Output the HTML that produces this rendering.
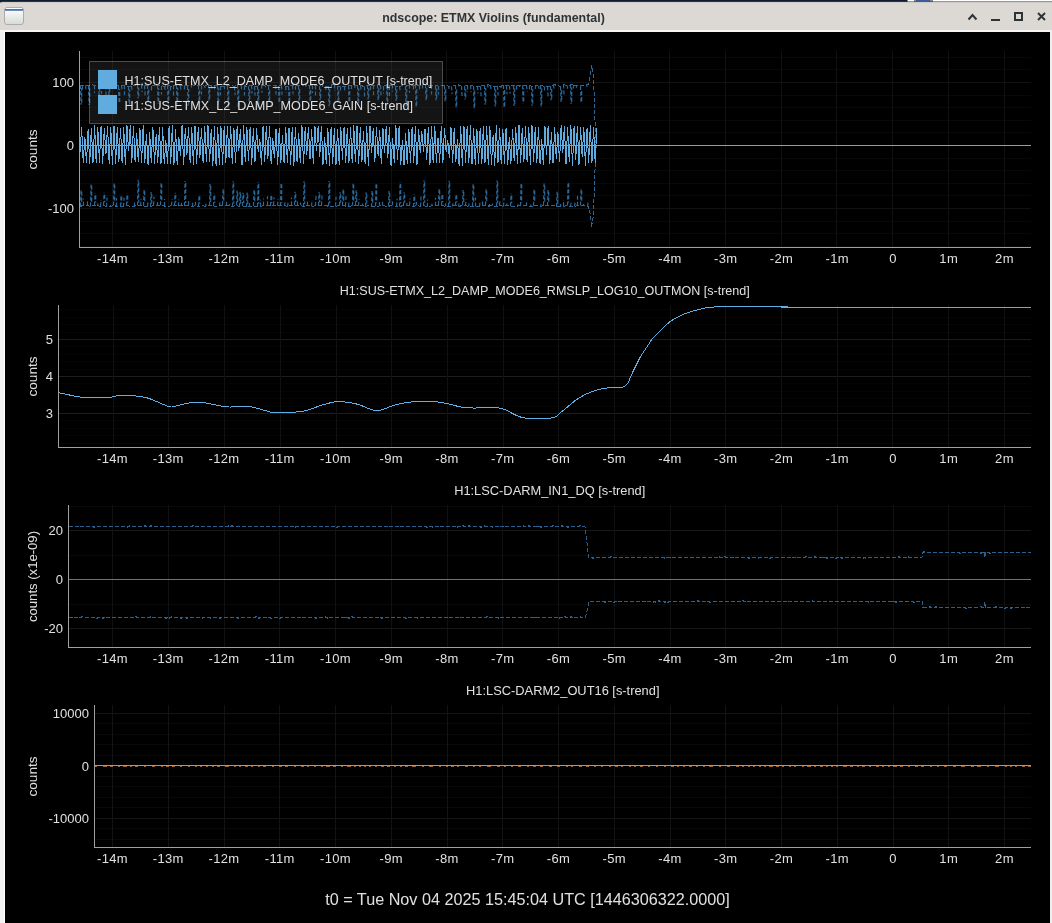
<!DOCTYPE html>
<html><head><meta charset="utf-8"><title>ndscope: ETMX Violins (fundamental)</title>
<style>
html,body{margin:0;padding:0;width:1052px;height:923px;overflow:hidden;background:#000;}
svg{display:block;will-change:transform;}
text{font-family:'Liberation Sans', sans-serif;}
</style></head><body>
<svg width="1052" height="923" viewBox="0 0 1052 923">
<rect x="0" y="0" width="1052" height="923" fill="#f3f2f0"/>
<rect x="0" y="0" width="1052" height="2" fill="#0f1c30"/>
<rect x="907" y="0" width="145" height="1.6" fill="#8a8a8a"/><rect x="908" y="0" width="6" height="1.6" fill="#ffffff"/><rect x="916" y="0" width="14" height="1.6" fill="#3b5b98"/><rect x="933" y="0" width="119" height="1.6" fill="#ffffff"/>
<rect x="0" y="1.6" width="1052" height="0.8" fill="#5a5a5a"/>
<rect x="0" y="0" width="1.5" height="3.5" fill="#0f1c30"/>
<rect x="0" y="2.4" width="1052" height="28" fill="#dcd8d4"/>
<rect x="0" y="30" width="1052" height="2" fill="#f7f6f5"/>
<rect x="1050" y="30" width="2" height="893" fill="#efefef"/>
<g>
<rect x="4.5" y="7.5" width="19" height="17" rx="2" fill="#808080"/>
<linearGradient id="wg" x1="0" y1="0" x2="0" y2="1"><stop offset="0" stop-color="#ffffff"/><stop offset="1" stop-color="#d8dcd8"/></linearGradient>
<rect x="5" y="8" width="18" height="16" rx="1.5" fill="url(#wg)"/>
<rect x="5" y="9" width="18" height="1.8" fill="#4a74b0"/>
</g>
<text x="493.5" y="21.6" text-anchor="middle" font-size="13" font-weight="bold" fill="#2e3436" textLength="222.7" lengthAdjust="spacingAndGlyphs">ndscope: ETMX Violins (fundamental)</text>
<g fill="none" stroke="#2e3436" stroke-width="2"><polyline points="968.5,19.5 972.5,15 976.5,19.5"/><rect x="1015" y="13" width="7" height="7"/><line x1="1038" y1="13" x2="1045" y2="20"/><line x1="1045" y1="13" x2="1038" y2="20"/></g><rect x="991" y="19" width="9" height="2" fill="#2e3436"/>
<rect x="5" y="32" width="1045" height="891" fill="#000"/>
<rect x="4" y="32" width="1" height="891" fill="#ffffff"/>
<g><rect x="80" y="246" width="951" height="1" fill="rgb(8,8,8)"/><rect x="80" y="233" width="951" height="1" fill="rgb(8,8,8)"/><rect x="80" y="221" width="951" height="1" fill="rgb(8,8,8)"/><rect x="80" y="195" width="951" height="1" fill="rgb(8,8,8)"/><rect x="80" y="183" width="951" height="1" fill="rgb(8,8,8)"/><rect x="80" y="170" width="951" height="1" fill="rgb(8,8,8)"/><rect x="80" y="158" width="951" height="1" fill="rgb(8,8,8)"/><rect x="80" y="132" width="951" height="1" fill="rgb(8,8,8)"/><rect x="80" y="120" width="951" height="1" fill="rgb(8,8,8)"/><rect x="80" y="107" width="951" height="1" fill="rgb(8,8,8)"/><rect x="80" y="95" width="951" height="1" fill="rgb(8,8,8)"/><rect x="80" y="69" width="951" height="1" fill="rgb(8,8,8)"/><rect x="80" y="57" width="951" height="1" fill="rgb(8,8,8)"/><rect x="80" y="82" width="951" height="1" fill="rgb(18,18,18)"/><rect x="80" y="145" width="951" height="1" fill="rgb(18,18,18)"/><rect x="80" y="208" width="951" height="1" fill="rgb(18,18,18)"/><rect x="112" y="51" width="1" height="196" fill="rgb(17,17,17)"/><rect x="168" y="51" width="1" height="196" fill="rgb(17,17,17)"/><rect x="224" y="51" width="1" height="196" fill="rgb(17,17,17)"/><rect x="279" y="51" width="1" height="196" fill="rgb(17,17,17)"/><rect x="335" y="51" width="1" height="196" fill="rgb(17,17,17)"/><rect x="391" y="51" width="1" height="196" fill="rgb(17,17,17)"/><rect x="446" y="51" width="1" height="196" fill="rgb(17,17,17)"/><rect x="502" y="51" width="1" height="196" fill="rgb(17,17,17)"/><rect x="558" y="51" width="1" height="196" fill="rgb(17,17,17)"/><rect x="614" y="51" width="1" height="196" fill="rgb(17,17,17)"/><rect x="669" y="51" width="1" height="196" fill="rgb(17,17,17)"/><rect x="725" y="51" width="1" height="196" fill="rgb(17,17,17)"/><rect x="781" y="51" width="1" height="196" fill="rgb(17,17,17)"/><rect x="836" y="51" width="1" height="196" fill="rgb(17,17,17)"/><rect x="892" y="51" width="1" height="196" fill="rgb(17,17,17)"/><rect x="948" y="51" width="1" height="196" fill="rgb(17,17,17)"/><rect x="1004" y="51" width="1" height="196" fill="rgb(17,17,17)"/></g>
<path d="M80.00,85.15 L82.87,85.57 L85.71,85.37 L88.57,85.63 L91.95,84.62 L94.97,85.61 L98.34,85.62 L101.72,84.88 L105.13,85.49 L108.52,85.41 L112.02,84.99 L115.55,85.08 L118.77,86.01 L121.61,85.84 L124.75,85.20 L128.39,86.39 L131.25,85.90 L134.33,85.27 L137.59,84.84 L141.16,84.76 L144.04,85.40 L147.71,85.06 L151.39,86.42 L154.85,84.52 L157.65,85.34 L161.41,85.88 L164.66,86.24 L167.86,85.29 L170.85,86.47 L173.75,85.63 L176.62,84.92 L180.38,85.70 L184.17,85.43 L187.72,85.98 L191.04,84.91 L194.60,85.10 L198.24,85.54 L201.26,85.58 L204.87,86.14 L208.03,84.56 L211.09,85.89 L214.84,85.23 L217.98,85.47 L220.78,86.32 L224.49,86.06 L227.72,85.77 L231.25,85.43 L234.20,86.49 L237.81,84.79 L241.27,85.20 L244.87,85.95 L248.10,86.24 L251.15,85.09 L254.50,86.17 L257.96,86.13 L261.64,84.76 L265.21,85.72 L268.49,85.95 L271.81,85.61 L275.17,85.00 L278.53,86.02 L281.94,85.51 L285.25,86.11 L288.97,86.29 L292.19,85.28 L295.06,85.84 L298.80,85.79 L301.74,85.44 L305.42,84.83 L309.22,85.31 L312.11,85.23 L315.29,85.53 L319.08,86.08 L322.14,84.58 L325.76,86.20 L328.71,86.34 L331.60,84.62 L334.67,84.53 L337.54,86.23 L340.89,86.35 L344.63,86.44 L348.06,85.56 L351.53,85.04 L354.35,85.97 L357.39,85.39 L360.85,85.59 L364.34,86.46 L367.54,85.20 L370.41,85.98 L373.88,85.26 L377.37,84.59 L380.17,85.23 L383.22,86.43 L386.35,84.67 L389.40,86.05 L392.60,84.58 L395.48,86.42 L399.18,86.07 L402.13,85.95 L405.76,86.28 L409.37,84.78 L413.00,85.67 L415.89,84.58 L419.06,85.40 L422.35,84.51 L425.81,84.63 L428.69,85.03 L431.98,85.27 L435.40,85.79 L438.45,85.99 L441.73,85.47 L444.75,85.48 L448.02,86.03 L451.79,86.37 L455.59,85.27 L458.46,84.68 L461.40,86.14 L464.43,86.30 L467.23,85.48 L470.45,85.25 L474.00,86.18 L477.51,86.30 L480.70,86.24 L484.36,85.06 L487.79,84.80 L490.78,85.25 L494.49,86.38 L497.34,85.96 L500.63,86.32 L503.77,85.10 L506.83,85.81 L509.75,85.79 L513.10,85.41 L516.33,85.60 L519.45,85.24 L523.00,85.33 L526.18,85.18 L529.10,85.51 L531.99,86.29 L535.23,85.12 L538.06,85.92 L540.86,85.28 L544.51,86.44 L547.47,86.44 L550.35,86.05 L553.72,84.58 L557.05,85.37 L560.15,86.39 L563.74,84.50 L567.50,85.79 L570.85,84.56 L573.70,84.89 L576.76,85.83 L580.25,85.94 L583.06,85.08 L586.36,84.90 L588.00,85.00 L590.50,75.00 L591.50,65.50 L593.00,72.00 L594.50,100.00 L595.50,140.00 L596.50,145.50 L1031.00,145.50" fill="none" stroke="#2b6797" stroke-width="1" stroke-dasharray="4 2" shape-rendering="crispEdges"/>
<path d="M80.5,85.1 L81.1,104.7 M81.7,102.7 L81.7,88.1 M82.5,85.6 L82.5,90.9 M85.5,85.4 L86.1,90.9 M88.5,85.6 L89.1,104.9 M89.7,102.9 L89.7,88.6 M94.5,85.6 L94.5,93.1 M98.5,85.6 L99.1,99.7 M99.7,97.7 L99.7,88.6 M101.5,84.9 L101.5,94.1 M105.5,85.5 L106.1,95.2 M108.5,85.4 L109.1,106.4 M109.7,104.4 L109.7,88.4 M112.5,85.0 L113.1,88.1 M118.5,86.0 L119.1,103.9 M119.7,101.9 L119.7,89.0 M121.5,85.8 L122.1,89.1 M124.5,85.2 L124.5,95.0 M128.5,86.4 L129.1,106.0 M129.7,104.0 L129.7,89.4 M131.5,85.9 L132.1,90.9 M137.5,84.8 L138.1,98.4 M138.7,96.4 L138.7,87.8 M141.5,84.8 L142.1,92.1 M144.5,85.4 L145.1,95.7 M147.5,85.1 L148.1,101.6 M148.7,99.6 L148.7,88.1 M151.5,86.4 L151.5,92.5 M154.5,84.5 L155.1,86.3 M157.5,85.3 L158.1,104.0 M158.7,102.0 L158.7,88.3 M161.5,85.9 L161.5,94.6 M164.5,86.2 L165.1,90.0 M167.5,85.3 L168.1,102.3 M168.7,100.3 L168.7,88.3 M170.5,86.5 L170.5,92.1 M173.5,85.6 L173.5,96.3 M176.5,84.9 L177.1,104.3 M177.7,102.3 L177.7,87.9 M180.5,85.7 L181.1,91.4 M184.5,85.4 L184.5,90.9 M187.5,86.0 L188.1,105.9 M188.7,103.9 L188.7,89.0 M191.5,84.9 L191.5,87.4 M198.5,85.5 L199.1,102.1 M199.7,100.1 L199.7,88.5 M201.5,85.6 L201.5,94.4 M204.5,86.1 L205.1,88.0 M208.5,84.6 L209.1,100.4 M209.7,98.4 L209.7,87.6 M211.5,85.9 L212.1,88.7 M214.5,85.2 L214.5,91.6 M217.5,85.5 L218.1,104.6 M218.7,102.6 L218.7,88.5 M220.5,86.3 L220.5,95.2 M224.5,86.1 L224.5,89.0 M227.5,85.8 L228.1,108.2 M228.7,106.2 L228.7,88.8 M234.5,86.5 L235.1,95.0 M237.5,84.8 L238.1,107.6 M238.7,105.6 L238.7,87.8 M241.5,85.2 L241.5,91.0 M244.5,86.0 L244.5,95.4 M248.5,86.2 L249.1,101.4 M249.7,99.4 L249.7,89.2 M251.5,85.1 L252.1,93.6 M254.5,86.2 L255.1,95.6 M257.5,86.1 L258.1,107.4 M258.7,105.4 L258.7,89.1 M261.5,84.8 L262.1,92.8 M265.5,85.7 L265.5,87.3 M268.5,86.0 L269.1,102.2 M269.7,100.2 L269.7,89.0 M275.5,85.0 L276.1,94.6 M278.5,86.0 L279.1,103.5 M279.7,101.5 L279.7,89.0 M281.5,85.5 L282.1,94.7 M285.5,86.1 L286.1,92.6 M288.5,86.3 L289.1,103.8 M289.7,101.8 L289.7,89.3 M292.5,85.3 L293.1,94.3 M295.5,85.8 L295.5,90.4 M298.5,85.8 L299.1,101.3 M299.7,99.3 L299.7,88.8 M305.5,84.8 L306.1,86.7 M309.5,85.3 L310.1,101.9 M310.7,99.9 L310.7,88.3 M312.5,85.2 L312.5,93.0 M315.5,85.5 L315.5,96.3 M319.5,86.1 L320.1,100.1 M320.7,98.1 L320.7,89.1 M322.5,84.6 L322.5,86.7 M325.5,86.2 L326.1,91.0 M328.5,86.3 L329.1,106.3 M329.7,104.3 L329.7,89.3 M331.5,84.6 L331.5,87.3 M334.5,84.5 L334.5,91.1 M337.5,86.2 L338.1,102.6 M338.7,100.6 L338.7,89.2 M340.5,86.4 L340.5,92.1 M344.5,86.4 L345.1,92.5 M348.5,85.6 L349.1,103.0 M349.7,101.0 L349.7,88.6 M351.5,85.0 L351.5,90.0 M354.5,86.0 L355.1,87.7 M357.5,85.4 L358.1,104.9 M358.7,102.9 L358.7,88.4 M360.5,85.6 L361.1,90.5 M364.5,86.5 L364.5,96.5 M367.5,85.2 L368.1,99.5 M368.7,97.5 L368.7,88.2 M370.5,86.0 L370.5,92.0 M373.5,85.3 L373.5,96.1 M377.5,84.6 L378.1,100.3 M378.7,98.3 L378.7,87.6 M380.5,85.2 L381.1,96.1 M383.5,86.4 L383.5,93.6 M386.5,84.7 L387.1,104.2 M387.7,102.2 L387.7,87.7 M389.5,86.1 L389.5,96.0 M392.5,84.6 L392.5,91.4 M395.5,86.4 L396.1,101.0 M396.7,99.0 L396.7,89.4 M399.5,86.1 L400.1,90.1 M405.5,86.3 L406.1,106.6 M406.7,104.6 L406.7,89.3 M409.5,84.8 L409.5,92.8 M413.5,85.7 L413.5,89.4 M415.5,84.6 L416.1,107.2 M416.7,105.2 L416.7,87.6 M419.5,85.4 L419.5,90.5 M422.5,84.5 L422.5,88.5 M425.5,84.6 L426.1,100.2 M426.7,98.2 L426.7,87.6 M428.5,85.0 L429.1,86.9 M431.5,85.3 L431.5,94.4 M435.5,85.8 L436.1,100.3 M436.7,98.3 L436.7,88.8 M438.5,86.0 L438.5,94.4 M444.5,85.5 L445.1,101.3 M445.7,99.3 L445.7,88.5 M448.5,86.0 L449.1,89.2 M451.5,86.4 L452.1,94.1 M455.5,85.3 L456.1,107.6 M456.7,105.6 L456.7,88.3 M458.5,84.7 L459.1,86.7 M461.5,86.1 L462.1,96.5 M464.5,86.3 L465.1,99.5 M465.7,97.5 L465.7,89.3 M467.5,85.5 L467.5,92.3 M470.5,85.3 L471.1,92.2 M473.5,86.2 L474.1,108.4 M474.7,106.4 L474.7,89.2 M477.5,86.3 L478.1,93.5 M480.5,86.2 L481.1,96.8 M484.5,85.1 L485.1,104.7 M485.7,102.7 L485.7,88.1 M487.5,84.8 L488.1,87.5 M490.5,85.2 L491.1,89.8 M494.5,86.4 L495.1,106.6 M495.7,104.6 L495.7,89.4 M497.5,86.0 L498.1,95.5 M500.5,86.3 L501.1,88.0 M503.5,85.1 L504.1,107.9 M504.7,105.9 L504.7,88.1 M506.5,85.8 L507.1,94.2 M509.5,85.8 L510.1,93.8 M513.5,85.4 L514.1,106.0 M514.7,104.0 L514.7,88.4 M516.5,85.6 L516.5,91.6 M519.5,85.2 L519.5,87.0 M522.5,85.3 L523.1,103.6 M523.7,101.6 L523.7,88.3 M526.5,85.2 L527.1,91.8 M529.5,85.5 L529.5,90.0 M531.5,86.3 L532.1,105.8 M532.7,103.8 L532.7,89.3 M535.5,85.1 L535.5,90.0 M538.5,85.9 L539.1,88.8 M540.5,85.3 L541.1,106.5 M541.7,104.5 L541.7,88.3 M544.5,86.4 L544.5,92.1 M547.5,86.4 L548.1,96.4 M550.5,86.1 L551.1,100.3 M551.7,98.3 L551.7,89.1 M553.5,84.6 L554.1,89.4 M560.5,86.4 L561.1,102.0 M561.7,100.0 L561.7,89.4 M563.5,84.5 L564.1,95.5 M567.5,85.8 L567.5,88.7 M570.5,84.6 L571.1,104.1 M571.7,102.1 L571.7,87.6 M573.5,84.9 L573.5,88.5 M576.5,85.8 L576.5,87.7 M580.5,85.9 L581.1,102.9 M581.7,100.9 L581.7,88.9 M586.5,84.9 L587.1,86.7" fill="none" stroke="#2b6797" stroke-width="1.2" stroke-dasharray="4 2"/>
<path d="M80.00,206.52 L83.40,205.37 L87.24,205.29 L90.56,206.42 L94.17,205.63 L97.24,205.38 L100.17,206.33 L103.51,205.22 L106.83,206.77 L110.09,206.64 L113.69,205.39 L116.92,206.47 L120.63,206.53 L123.59,206.84 L126.85,205.67 L130.50,206.38 L134.12,206.19 L137.05,205.47 L140.90,205.77 L143.93,205.99 L147.14,206.38 L150.50,206.57 L153.79,205.32 L157.24,205.65 L160.41,205.17 L164.02,205.89 L167.66,206.69 L171.41,205.59 L174.50,205.49 L178.29,206.16 L181.70,205.46 L184.70,205.95 L188.51,205.08 L192.01,206.66 L195.36,205.52 L198.90,206.42 L202.14,205.09 L205.77,206.83 L209.35,205.37 L213.05,206.10 L216.34,206.10 L219.40,206.39 L222.72,205.10 L226.04,205.04 L229.33,205.81 L232.65,206.64 L236.01,205.33 L239.55,206.82 L242.82,206.01 L246.24,206.85 L249.95,206.93 L253.83,205.97 L257.11,206.81 L260.17,206.57 L263.90,205.37 L267.19,205.25 L270.13,206.12 L273.87,205.24 L277.41,205.62 L280.76,205.88 L284.15,205.47 L287.89,206.62 L291.22,205.18 L294.16,205.26 L297.78,205.16 L300.70,205.13 L303.80,206.96 L307.61,205.33 L311.35,206.22 L315.15,205.91 L318.26,205.53 L321.20,205.36 L324.99,205.34 L328.42,206.27 L331.88,206.16 L335.77,206.26 L339.05,205.74 L342.03,205.46 L345.23,206.03 L348.86,206.49 L352.18,205.73 L355.69,205.09 L358.89,206.05 L362.38,205.41 L365.30,206.60 L368.26,205.29 L371.97,206.93 L375.76,206.19 L379.18,205.99 L382.61,205.81 L385.53,206.10 L388.62,206.22 L392.34,205.35 L396.23,206.45 L399.98,206.49 L403.33,205.45 L406.27,205.67 L409.88,205.53 L413.08,206.86 L416.48,205.34 L420.33,206.49 L423.83,205.76 L427.71,206.68 L431.47,205.87 L435.16,205.78 L438.20,205.05 L441.45,205.28 L445.04,206.27 L448.80,206.52 L452.23,206.33 L455.24,205.41 L458.98,206.62 L462.36,205.27 L465.56,205.67 L468.50,206.52 L472.26,206.24 L475.59,206.55 L479.21,206.66 L482.11,205.40 L485.36,205.19 L489.22,206.19 L492.41,205.43 L496.24,206.53 L499.71,205.21 L503.50,206.49 L506.60,205.53 L510.49,206.26 L513.98,206.38 L517.46,206.04 L520.53,205.88 L523.56,205.92 L526.65,205.60 L530.27,206.95 L533.33,205.66 L536.96,205.20 L540.25,206.97 L543.42,205.22 L547.21,205.93 L550.54,205.44 L553.46,205.51 L556.61,206.71 L560.15,206.69 L563.73,206.28 L567.53,205.48 L570.58,206.70 L574.00,206.32 L577.68,205.78 L580.83,205.44 L583.93,205.70 L587.55,206.02 L588.00,206.00 L590.50,215.00 L591.50,227.50 L593.00,218.00 L594.50,190.00 L595.50,150.00 L596.50,145.50 L1031.00,145.50" fill="none" stroke="#2b6797" stroke-width="1" stroke-dasharray="4 2" shape-rendering="crispEdges"/>
<path d="M80.5,206.5 L81.1,189.8 M81.7,191.8 L81.7,203.5 M83.5,205.4 L83.5,198.5 M87.5,205.3 L87.5,199.8 M90.5,206.4 L91.1,183.7 M91.7,185.7 L91.7,203.4 M94.5,205.6 L95.1,193.2 M95.7,195.2 L95.7,202.6 M97.5,205.4 L98.1,203.3 M100.5,206.3 L101.1,199.7 M103.5,205.2 L104.1,192.8 M104.7,194.8 L104.7,202.2 M106.5,206.8 L107.1,197.5 M110.5,206.6 L110.5,204.9 M113.5,205.4 L114.1,182.7 M114.7,184.7 L114.7,202.4 M116.5,206.5 L116.5,198.1 M120.5,206.5 L121.1,194.4 M121.7,196.4 L121.7,203.5 M123.5,206.8 L124.1,197.6 M126.5,205.7 L127.1,193.5 M127.7,195.5 L127.7,202.7 M134.5,206.2 L134.5,202.4 M137.5,205.5 L138.1,179.7 M138.7,181.7 L138.7,202.5 M140.5,205.8 L141.1,198.8 M143.5,206.0 L144.1,189.3 M144.7,191.3 L144.7,203.0 M147.5,206.4 L148.1,200.7 M150.5,206.6 L151.1,192.0 M151.7,194.0 L151.7,203.6 M153.5,205.3 L154.1,196.8 M157.5,205.7 L157.5,202.1 M160.5,205.2 L161.1,182.2 M161.7,184.2 L161.7,202.2 M164.5,205.9 L164.5,199.0 M171.5,205.6 L172.1,199.0 M174.5,205.5 L175.1,192.7 M175.7,194.7 L175.7,202.5 M178.5,206.2 L178.5,199.4 M181.5,205.5 L181.5,202.8 M184.5,205.9 L185.1,180.9 M185.7,182.9 L185.7,202.9 M188.5,205.1 L188.5,200.2 M192.5,206.7 L192.5,202.1 M195.5,205.5 L195.5,201.7 M198.5,206.4 L199.1,194.2 M199.7,196.2 L199.7,203.4 M205.5,206.8 L206.1,203.6 M209.5,205.4 L210.1,184.1 M210.7,186.1 L210.7,202.4 M213.5,206.1 L214.1,193.6 M214.7,195.6 L214.7,203.1 M219.5,206.4 L220.1,200.4 M222.5,205.1 L223.1,188.7 M223.7,190.7 L223.7,202.1 M226.5,205.0 L226.5,201.8 M229.5,205.8 L229.5,204.1 M232.5,206.6 L233.1,181.3 M233.7,183.3 L233.7,203.6 M236.5,205.3 L237.1,190.6 M237.7,192.6 L237.7,202.3 M239.5,206.8 L240.1,191.7 M240.7,193.7 L240.7,203.8 M242.5,206.0 L243.1,192.6 M243.7,194.6 L243.7,203.0 M246.5,206.9 L247.1,192.4 M247.7,194.4 L247.7,203.9 M249.5,206.9 L249.5,202.0 M253.5,206.0 L254.1,189.3 M254.7,191.3 L254.7,203.0 M257.5,206.8 L258.1,181.9 M258.7,183.9 L258.7,203.8 M260.5,206.6 L260.5,199.7 M263.5,205.4 L263.5,198.6 M267.5,205.2 L267.5,196.2 M270.5,206.1 L271.1,193.9 M271.7,195.9 L271.7,203.1 M273.5,205.2 L274.1,197.4 M277.5,205.6 L278.1,198.9 M280.5,205.9 L281.1,182.2 M281.7,184.2 L281.7,202.9 M284.5,205.5 L285.1,202.4 M287.5,206.6 L288.1,202.2 M291.5,205.2 L291.5,197.6 M294.5,205.3 L295.1,191.7 M295.7,193.7 L295.7,202.3 M297.5,205.2 L297.5,201.6 M300.5,205.1 L300.5,202.4 M303.5,207.0 L304.1,181.2 M304.7,183.2 L304.7,204.0 M307.5,205.3 L307.5,201.6 M311.5,206.2 L312.1,200.0 M315.5,205.9 L316.1,195.2 M318.5,205.5 L319.1,191.9 M319.7,193.9 L319.7,202.5 M321.5,205.4 L322.1,194.8 M328.5,206.3 L329.1,181.0 M329.7,183.0 L329.7,203.3 M335.5,206.3 L336.1,196.7 M339.5,205.7 L340.1,192.1 M340.7,194.1 L340.7,202.7 M342.5,205.5 L343.1,188.7 M343.7,190.7 L343.7,202.5 M345.5,206.0 L346.1,195.3 M348.5,206.5 L349.1,200.5 M352.5,205.7 L353.1,182.8 M353.7,184.8 L353.7,202.7 M355.5,205.1 L356.1,190.3 M356.7,192.3 L356.7,202.1 M358.5,206.0 L359.1,199.2 M362.5,205.4 L362.5,203.5 M365.5,206.6 L366.1,192.3 M366.7,194.3 L366.7,203.6 M371.5,206.9 L372.1,190.8 M372.7,192.8 L372.7,203.9 M375.5,206.2 L376.1,182.6 M376.7,184.6 L376.7,203.2 M379.5,206.0 L379.5,202.0 M382.5,205.8 L382.5,201.4 M388.5,206.2 L389.1,191.0 M389.7,193.0 L389.7,203.2 M392.5,205.3 L392.5,199.2 M396.5,206.4 L397.1,198.7 M399.5,206.5 L400.1,182.0 M400.7,184.0 L400.7,203.5 M403.5,205.5 L404.1,192.3 M404.7,194.3 L404.7,202.5 M406.5,205.7 L407.1,202.9 M409.5,205.5 L410.1,198.5 M413.5,206.9 L414.1,194.4 M414.7,196.4 L414.7,203.9 M416.5,205.3 L416.5,202.0 M420.5,206.5 L421.1,196.3 M423.5,205.8 L424.1,180.2 M424.7,182.2 L424.7,202.8 M427.5,206.7 L427.5,199.4 M431.5,205.9 L432.1,203.6 M435.5,205.8 L435.5,197.8 M438.5,205.1 L439.1,188.4 M439.7,190.4 L439.7,202.1 M441.5,205.3 L442.1,193.1 M442.7,195.1 L442.7,202.3 M445.5,206.3 L445.5,203.3 M448.5,206.5 L449.1,180.8 M449.7,182.8 L449.7,203.5 M452.5,206.3 L453.1,203.3 M455.5,205.4 L456.1,193.2 M456.7,195.2 L456.7,202.4 M458.5,206.6 L459.1,203.3 M462.5,205.3 L463.1,190.0 M463.7,192.0 L463.7,202.3 M465.5,205.7 L466.1,199.2 M468.5,206.5 L469.1,203.4 M472.5,206.2 L473.1,183.8 M473.7,185.8 L473.7,203.2 M475.5,206.5 L475.5,197.6 M479.5,206.7 L480.1,200.6 M482.5,205.4 L482.5,201.5 M485.5,205.2 L486.1,189.1 M486.7,191.1 L486.7,202.2 M489.5,206.2 L489.5,204.1 M492.5,205.4 L492.5,203.4 M496.5,206.5 L497.1,180.6 M497.7,182.6 L497.7,203.5 M499.5,205.2 L500.1,200.5 M503.5,206.5 L504.1,198.0 M506.5,205.5 L507.1,203.5 M510.5,206.3 L511.1,193.6 M511.7,195.6 L511.7,203.3 M517.5,206.0 L518.1,204.2 M520.5,205.9 L521.1,182.4 M521.7,184.4 L521.7,202.9 M526.5,205.6 L526.5,202.2 M530.5,206.9 L531.1,204.5 M533.5,205.7 L534.1,188.8 M534.7,190.8 L534.7,202.7 M540.5,207.0 L541.1,204.0 M543.5,205.2 L544.1,183.5 M544.7,185.5 L544.7,202.2 M547.5,205.9 L548.1,189.7 M548.7,191.7 L548.7,202.9 M556.5,206.7 L557.1,191.8 M557.7,193.8 L557.7,203.7 M560.5,206.7 L560.5,204.1 M563.5,206.3 L563.5,200.1 M567.5,205.5 L568.1,181.2 M568.7,183.2 L568.7,202.5 M570.5,206.7 L571.1,202.6 M574.5,206.3 L575.1,202.7 M577.5,205.8 L577.5,195.0 M580.5,205.4 L581.1,188.7 M581.7,190.7 L581.7,202.4 M583.5,205.7 L583.5,203.9 M587.5,206.0 L588.1,202.7" fill="none" stroke="#2b6797" stroke-width="1.2" stroke-dasharray="4 2"/>
<rect x="80" y="145" width="951" height="1" fill="#60acde"/>
<path d="M80.00,152.81 L81.62,127.43 L83.24,162.49 L84.86,136.59 L86.48,163.10 L88.10,128.95 L89.72,163.68 L91.34,127.59 L92.96,162.90 L94.58,125.24 L96.20,162.88 L97.82,127.43 L99.44,162.52 L101.06,125.76 L102.68,163.88 L104.30,128.10 L105.92,154.38 L107.54,125.73 L109.16,163.87 L110.78,126.81 L112.40,165.33 L114.02,125.60 L115.64,163.50 L117.26,127.30 L118.88,162.01 L120.50,127.88 L122.12,163.21 L123.74,127.29 L125.36,164.64 L126.98,125.29 L128.60,151.13 L130.22,125.38 L131.84,162.56 L133.46,126.47 L135.08,162.05 L136.70,133.28 L138.32,162.41 L139.94,128.07 L141.56,163.39 L143.18,125.38 L144.80,162.67 L146.42,133.81 L148.04,164.67 L149.66,131.83 L151.28,162.79 L152.90,126.88 L154.52,163.75 L156.14,134.39 L157.76,162.94 L159.38,127.03 L161.00,163.87 L162.62,127.03 L164.24,164.16 L165.86,140.43 L167.48,163.87 L169.10,126.34 L170.72,163.50 L172.34,125.16 L173.96,164.55 L175.58,128.89 L177.20,164.73 L178.82,136.86 L180.44,156.12 L182.06,125.41 L183.68,164.87 L185.30,127.65 L186.92,154.53 L188.54,126.90 L190.16,162.84 L191.78,127.31 L193.40,165.31 L195.02,125.69 L196.64,164.01 L198.26,126.97 L199.88,157.70 L201.50,127.68 L203.12,163.20 L204.74,126.46 L206.36,162.16 L207.98,125.46 L209.60,162.20 L211.22,128.98 L212.84,165.69 L214.46,126.37 L216.08,165.64 L217.70,126.53 L219.32,164.79 L220.94,126.28 L222.56,164.67 L224.18,125.95 L225.80,162.73 L227.42,125.90 L229.04,157.71 L230.66,125.71 L232.28,164.25 L233.90,127.79 L235.52,163.27 L237.14,126.43 L238.76,151.10 L240.38,128.84 L242.00,165.24 L243.62,125.33 L245.24,162.06 L246.86,126.63 L248.48,161.29 L250.10,127.35 L251.72,164.58 L253.34,128.39 L254.96,162.02 L256.58,128.51 L258.20,151.47 L259.82,139.08 L261.44,164.88 L263.06,126.07 L264.68,162.20 L266.30,126.15 L267.92,158.53 L269.54,126.49 L271.16,163.84 L272.78,137.71 L274.40,158.39 L276.02,128.94 L277.64,165.27 L279.26,127.76 L280.88,162.66 L282.50,135.15 L284.12,163.47 L285.74,127.25 L287.36,162.58 L288.98,127.55 L290.60,164.52 L292.22,127.46 L293.84,165.78 L295.46,126.73 L297.08,162.24 L298.70,132.76 L300.32,163.33 L301.94,125.09 L303.56,164.40 L305.18,127.29 L306.80,154.64 L308.42,126.59 L310.04,159.38 L311.66,128.99 L313.28,163.69 L314.90,125.74 L316.52,150.97 L318.14,125.75 L319.76,156.79 L321.38,125.60 L323.00,164.74 L324.62,136.68 L326.24,164.21 L327.86,128.20 L329.48,165.73 L331.10,126.57 L332.72,163.86 L334.34,127.98 L335.96,165.17 L337.58,128.65 L339.20,165.09 L340.82,126.68 L342.44,160.24 L344.06,127.09 L345.68,162.76 L347.30,128.28 L348.92,163.45 L350.54,127.39 L352.16,162.60 L353.78,125.01 L355.40,162.42 L357.02,125.85 L358.64,164.39 L360.26,126.92 L361.88,162.13 L363.50,130.97 L365.12,164.27 L366.74,125.88 L368.36,165.79 L369.98,125.72 L371.60,153.29 L373.22,128.20 L374.84,162.33 L376.46,126.77 L378.08,155.54 L379.70,130.49 L381.32,164.39 L382.94,128.52 L384.56,153.33 L386.18,126.44 L387.80,157.87 L389.42,127.21 L391.04,165.86 L392.66,138.06 L394.28,163.02 L395.90,125.39 L397.52,159.71 L399.14,125.85 L400.76,164.59 L402.38,139.89 L404.00,165.02 L405.62,133.05 L407.24,164.37 L408.86,128.58 L410.48,163.03 L412.10,127.07 L413.72,162.95 L415.34,126.29 L416.96,164.87 L418.58,128.86 L420.20,152.93 L421.82,130.97 L423.44,152.04 L425.06,128.61 L426.68,159.76 L428.30,127.19 L429.92,165.29 L431.54,126.49 L433.16,162.89 L434.78,126.15 L436.40,162.58 L438.02,137.57 L439.64,162.62 L441.26,125.64 L442.88,162.67 L444.50,127.73 L446.12,151.76 L447.74,139.87 L449.36,157.85 L450.98,127.09 L452.60,163.03 L454.22,127.54 L455.84,161.48 L457.46,139.43 L459.08,165.58 L460.70,126.09 L462.32,165.91 L463.94,125.77 L465.56,162.56 L467.18,125.67 L468.80,162.74 L470.42,125.35 L472.04,164.29 L473.66,128.28 L475.28,164.85 L476.90,128.68 L478.52,164.43 L480.14,127.90 L481.76,164.45 L483.38,125.75 L485.00,162.81 L486.62,126.07 L488.24,164.89 L489.86,125.76 L491.48,165.37 L493.10,135.08 L494.72,165.64 L496.34,125.51 L497.96,162.74 L499.58,127.53 L501.20,163.48 L502.82,128.98 L504.44,163.78 L506.06,128.52 L507.68,165.27 L509.30,136.97 L510.92,163.53 L512.54,128.76 L514.16,160.99 L515.78,126.95 L517.40,164.15 L519.02,125.13 L520.64,162.73 L522.26,128.00 L523.88,162.12 L525.50,126.20 L527.12,162.07 L528.74,126.69 L530.36,164.81 L531.98,125.52 L533.60,162.18 L535.22,127.03 L536.84,163.12 L538.46,127.38 L540.08,164.37 L541.70,138.88 L543.32,164.99 L544.94,125.70 L546.56,154.78 L548.18,125.64 L549.80,163.58 L551.42,131.95 L553.04,162.96 L554.66,127.26 L556.28,159.35 L557.90,131.53 L559.52,162.21 L561.14,125.17 L562.76,153.24 L564.38,126.47 L566.00,164.12 L567.62,127.27 L569.24,162.08 L570.86,125.12 L572.48,165.75 L574.10,125.76 L575.72,160.23 L577.34,126.43 L578.96,164.71 L580.58,126.83 L582.20,157.33 L583.82,126.92 L585.44,165.80 L587.06,127.78 L588.68,162.48 L590.30,125.18 L591.92,163.07 L593.54,126.86 L595.16,162.50 L596.78,127.83" fill="none" stroke="#60acde" stroke-width="1" shape-rendering="crispEdges"/>
<rect x="79" y="51" width="1" height="197" fill="#a0a0a0"/>
<rect x="79" y="247" width="952" height="1" fill="#a0a0a0"/>
<g><text x="74" y="87.0" text-anchor="end" font-size="13" fill="#e0e0e0">100</text><text x="74" y="150.1" text-anchor="end" font-size="13" fill="#e0e0e0">0</text><text x="74" y="213.2" text-anchor="end" font-size="13" fill="#e0e0e0">-100</text><text x="112.5" y="262.6" text-anchor="middle" font-size="13" letter-spacing="0.35" fill="#e0e0e0">-14m</text><text x="168.25" y="262.6" text-anchor="middle" font-size="13" letter-spacing="0.35" fill="#e0e0e0">-13m</text><text x="224.0" y="262.6" text-anchor="middle" font-size="13" letter-spacing="0.35" fill="#e0e0e0">-12m</text><text x="279.75" y="262.6" text-anchor="middle" font-size="13" letter-spacing="0.35" fill="#e0e0e0">-11m</text><text x="335.5" y="262.6" text-anchor="middle" font-size="13" letter-spacing="0.35" fill="#e0e0e0">-10m</text><text x="391.25" y="262.6" text-anchor="middle" font-size="13" letter-spacing="0.35" fill="#e0e0e0">-9m</text><text x="447.0" y="262.6" text-anchor="middle" font-size="13" letter-spacing="0.35" fill="#e0e0e0">-8m</text><text x="502.75" y="262.6" text-anchor="middle" font-size="13" letter-spacing="0.35" fill="#e0e0e0">-7m</text><text x="558.5" y="262.6" text-anchor="middle" font-size="13" letter-spacing="0.35" fill="#e0e0e0">-6m</text><text x="614.25" y="262.6" text-anchor="middle" font-size="13" letter-spacing="0.35" fill="#e0e0e0">-5m</text><text x="670.0" y="262.6" text-anchor="middle" font-size="13" letter-spacing="0.35" fill="#e0e0e0">-4m</text><text x="725.75" y="262.6" text-anchor="middle" font-size="13" letter-spacing="0.35" fill="#e0e0e0">-3m</text><text x="781.5" y="262.6" text-anchor="middle" font-size="13" letter-spacing="0.35" fill="#e0e0e0">-2m</text><text x="837.25" y="262.6" text-anchor="middle" font-size="13" letter-spacing="0.35" fill="#e0e0e0">-1m</text><text x="893.0" y="262.6" text-anchor="middle" font-size="13" letter-spacing="0.35" fill="#e0e0e0">0</text><text x="948.75" y="262.6" text-anchor="middle" font-size="13" letter-spacing="0.35" fill="#e0e0e0">1m</text><text x="1004.5" y="262.6" text-anchor="middle" font-size="13" letter-spacing="0.35" fill="#e0e0e0">2m</text><text transform="translate(37.2,149.5) rotate(-90)" x="0" y="0" text-anchor="middle" font-size="13" fill="#e0e0e0" textLength="40" lengthAdjust="spacingAndGlyphs">counts</text></g>
<rect x="89.5" y="61.5" width="353" height="62" fill="rgba(100,100,100,0.2)" stroke="rgba(255,255,255,0.27)" stroke-width="1"/>
<rect x="98" y="70" width="19" height="19" fill="#60acde"/>
<rect x="98" y="95" width="19" height="19" fill="#60acde"/>
<text x="124.5" y="85" font-size="12.7" fill="#e0e0e0" textLength="307.7" lengthAdjust="spacingAndGlyphs">H1:SUS-ETMX_L2_DAMP_MODE6_OUTPUT [s-trend]</text>
<text x="124.5" y="110" font-size="12.7" fill="#e0e0e0" textLength="288.4" lengthAdjust="spacingAndGlyphs">H1:SUS-ETMX_L2_DAMP_MODE6_GAIN [s-trend]</text>
<g><rect x="59" y="443" width="972" height="1" fill="rgb(5,5,5)"/><rect x="59" y="435" width="972" height="1" fill="rgb(5,5,5)"/><rect x="59" y="428" width="972" height="1" fill="rgb(5,5,5)"/><rect x="59" y="420" width="972" height="1" fill="rgb(5,5,5)"/><rect x="59" y="406" width="972" height="1" fill="rgb(5,5,5)"/><rect x="59" y="398" width="972" height="1" fill="rgb(5,5,5)"/><rect x="59" y="391" width="972" height="1" fill="rgb(5,5,5)"/><rect x="59" y="383" width="972" height="1" fill="rgb(5,5,5)"/><rect x="59" y="369" width="972" height="1" fill="rgb(5,5,5)"/><rect x="59" y="361" width="972" height="1" fill="rgb(5,5,5)"/><rect x="59" y="354" width="972" height="1" fill="rgb(5,5,5)"/><rect x="59" y="346" width="972" height="1" fill="rgb(5,5,5)"/><rect x="59" y="332" width="972" height="1" fill="rgb(5,5,5)"/><rect x="59" y="324" width="972" height="1" fill="rgb(5,5,5)"/><rect x="59" y="317" width="972" height="1" fill="rgb(5,5,5)"/><rect x="59" y="309" width="972" height="1" fill="rgb(5,5,5)"/><rect x="59" y="413" width="972" height="1" fill="rgb(29,29,29)"/><rect x="59" y="376" width="972" height="1" fill="rgb(29,29,29)"/><rect x="59" y="339" width="972" height="1" fill="rgb(29,29,29)"/><rect x="113" y="305" width="1" height="142" fill="rgb(17,17,17)"/><rect x="168" y="305" width="1" height="142" fill="rgb(17,17,17)"/><rect x="224" y="305" width="1" height="142" fill="rgb(17,17,17)"/><rect x="280" y="305" width="1" height="142" fill="rgb(17,17,17)"/><rect x="336" y="305" width="1" height="142" fill="rgb(17,17,17)"/><rect x="391" y="305" width="1" height="142" fill="rgb(17,17,17)"/><rect x="447" y="305" width="1" height="142" fill="rgb(17,17,17)"/><rect x="503" y="305" width="1" height="142" fill="rgb(17,17,17)"/><rect x="558" y="305" width="1" height="142" fill="rgb(17,17,17)"/><rect x="614" y="305" width="1" height="142" fill="rgb(17,17,17)"/><rect x="670" y="305" width="1" height="142" fill="rgb(17,17,17)"/><rect x="725" y="305" width="1" height="142" fill="rgb(17,17,17)"/><rect x="781" y="305" width="1" height="142" fill="rgb(17,17,17)"/><rect x="837" y="305" width="1" height="142" fill="rgb(17,17,17)"/><rect x="892" y="305" width="1" height="142" fill="rgb(17,17,17)"/><rect x="948" y="305" width="1" height="142" fill="rgb(17,17,17)"/><rect x="1004" y="305" width="1" height="142" fill="rgb(17,17,17)"/></g>
<path d="M59.00,392.80 C60.23,393.03 62.78,393.48 66.40,394.20 C70.02,394.92 73.33,396.62 80.70,397.10 C88.07,397.58 105.13,397.25 110.60,397.10 C116.07,396.95 110.65,396.48 113.50,396.20 C116.35,395.92 123.20,395.35 127.70,395.40 C132.20,395.45 136.93,395.98 140.50,396.50 C144.07,397.02 144.82,396.98 149.10,398.50 C153.38,400.02 162.40,404.18 166.20,405.60 C170.00,407.02 169.52,407.13 171.90,407.00 C174.28,406.87 176.70,405.60 180.50,404.80 C184.30,404.00 190.90,402.58 194.70,402.20 C198.50,401.82 199.97,402.07 203.30,402.50 C206.63,402.93 210.43,404.05 214.70,404.80 C218.97,405.55 223.20,406.72 228.90,407.00 C234.60,407.28 242.72,405.87 248.90,406.50 C255.08,407.13 262.20,409.85 266.00,410.80 C269.80,411.75 268.37,411.97 271.70,412.20 C275.03,412.43 280.78,412.35 286.00,412.20 C291.22,412.05 296.83,412.53 303.00,411.30 C309.17,410.07 317.28,406.45 323.00,404.80 C328.72,403.15 333.48,401.83 337.30,401.40 C341.12,400.97 342.95,401.83 345.90,402.20 C348.85,402.57 352.42,403.03 355.00,403.60 C357.58,404.17 358.43,404.55 361.40,405.60 C364.37,406.65 369.47,409.18 372.80,409.90 C376.13,410.62 377.60,410.75 381.40,409.90 C385.20,409.05 389.90,406.22 395.60,404.80 C401.30,403.38 409.42,401.97 415.60,401.40 C421.78,400.83 427.48,401.03 432.70,401.40 C437.92,401.77 441.68,402.57 446.90,403.60 C452.12,404.63 458.28,406.88 464.00,407.60 C469.72,408.32 476.43,407.98 481.20,407.90 C485.97,407.82 488.80,406.87 492.60,407.10 C496.40,407.33 498.78,407.50 504.00,409.30 C509.22,411.10 515.83,416.47 523.90,417.90 C531.97,419.33 546.22,418.85 552.40,417.90 C558.58,416.95 556.72,415.43 561.00,412.20 C565.28,408.97 572.87,401.97 578.10,398.50 C583.33,395.03 587.65,393.15 592.40,391.40 C597.15,389.65 602.00,388.70 606.60,388.00 C611.20,387.30 617.33,387.33 620.00,387.20 C622.67,387.07 621.83,387.37 622.60,387.20 C623.37,387.03 623.73,386.85 624.60,386.20 C625.47,385.55 626.83,384.75 627.80,383.30 C628.77,381.85 629.53,379.45 630.40,377.50 C631.27,375.55 632.13,373.45 633.00,371.60 C633.87,369.75 634.73,368.13 635.60,366.40 C636.47,364.67 637.33,362.93 638.20,361.20 C639.07,359.47 639.93,357.52 640.80,356.00 C641.67,354.48 642.53,353.40 643.40,352.10 C644.27,350.80 645.13,349.50 646.00,348.20 C646.87,346.90 647.52,345.92 648.60,344.30 C649.68,342.68 651.20,340.12 652.50,338.50 C653.80,336.88 655.05,335.97 656.40,334.60 C657.75,333.23 658.12,332.62 660.60,330.30 C663.08,327.98 667.15,323.50 671.30,320.70 C675.45,317.90 680.75,315.40 685.50,313.50 C690.25,311.60 695.98,310.30 699.80,309.30 C703.62,308.30 704.12,307.98 708.40,307.50 C712.68,307.02 716.90,306.58 725.50,306.40 C734.10,306.22 750.03,306.40 760.00,306.40 C769.97,306.40 780.80,306.28 785.30,306.40 C789.80,306.52 786.22,306.95 787.00,307.10 C787.78,307.25 771.17,307.27 790.00,307.30 C808.83,307.33 859.83,307.30 900.00,307.30 C940.17,307.30 1009.17,307.30 1031.00,307.30" fill="none" stroke="#5fb0e6" stroke-width="1" shape-rendering="crispEdges"/>
<rect x="58" y="305" width="1" height="143" fill="#a0a0a0"/>
<rect x="58" y="447" width="973" height="1" fill="#a0a0a0"/>
<g><text x="53" y="344.1" text-anchor="end" font-size="13" fill="#e0e0e0">5</text><text x="53" y="381.1" text-anchor="end" font-size="13" fill="#e0e0e0">4</text><text x="53" y="418.1" text-anchor="end" font-size="13" fill="#e0e0e0">3</text><text x="112.5" y="462.6" text-anchor="middle" font-size="13" letter-spacing="0.35" fill="#e0e0e0">-14m</text><text x="168.25" y="462.6" text-anchor="middle" font-size="13" letter-spacing="0.35" fill="#e0e0e0">-13m</text><text x="224.0" y="462.6" text-anchor="middle" font-size="13" letter-spacing="0.35" fill="#e0e0e0">-12m</text><text x="279.75" y="462.6" text-anchor="middle" font-size="13" letter-spacing="0.35" fill="#e0e0e0">-11m</text><text x="335.5" y="462.6" text-anchor="middle" font-size="13" letter-spacing="0.35" fill="#e0e0e0">-10m</text><text x="391.25" y="462.6" text-anchor="middle" font-size="13" letter-spacing="0.35" fill="#e0e0e0">-9m</text><text x="447.0" y="462.6" text-anchor="middle" font-size="13" letter-spacing="0.35" fill="#e0e0e0">-8m</text><text x="502.75" y="462.6" text-anchor="middle" font-size="13" letter-spacing="0.35" fill="#e0e0e0">-7m</text><text x="558.5" y="462.6" text-anchor="middle" font-size="13" letter-spacing="0.35" fill="#e0e0e0">-6m</text><text x="614.25" y="462.6" text-anchor="middle" font-size="13" letter-spacing="0.35" fill="#e0e0e0">-5m</text><text x="670.0" y="462.6" text-anchor="middle" font-size="13" letter-spacing="0.35" fill="#e0e0e0">-4m</text><text x="725.75" y="462.6" text-anchor="middle" font-size="13" letter-spacing="0.35" fill="#e0e0e0">-3m</text><text x="781.5" y="462.6" text-anchor="middle" font-size="13" letter-spacing="0.35" fill="#e0e0e0">-2m</text><text x="837.25" y="462.6" text-anchor="middle" font-size="13" letter-spacing="0.35" fill="#e0e0e0">-1m</text><text x="893.0" y="462.6" text-anchor="middle" font-size="13" letter-spacing="0.35" fill="#e0e0e0">0</text><text x="948.75" y="462.6" text-anchor="middle" font-size="13" letter-spacing="0.35" fill="#e0e0e0">1m</text><text x="1004.5" y="462.6" text-anchor="middle" font-size="13" letter-spacing="0.35" fill="#e0e0e0">2m</text><text transform="translate(37.2,376.5) rotate(-90)" x="0" y="0" text-anchor="middle" font-size="13" fill="#e0e0e0" textLength="40" lengthAdjust="spacingAndGlyphs">counts</text><text x="544.75" y="295.3" text-anchor="middle" font-size="12.7" fill="#e0e0e0" textLength="410" lengthAdjust="spacingAndGlyphs">H1:SUS-ETMX_L2_DAMP_MODE6_RMSLP_LOG10_OUTMON [s-trend]</text></g>
<g><rect x="69" y="506" width="962" height="1" fill="rgb(10,10,10)"/><rect x="69" y="555" width="962" height="1" fill="rgb(10,10,10)"/><rect x="69" y="604" width="962" height="1" fill="rgb(10,10,10)"/><rect x="69" y="530" width="962" height="1" fill="rgb(24,24,24)"/><rect x="69" y="579" width="962" height="1" fill="rgb(24,24,24)"/><rect x="69" y="628" width="962" height="1" fill="rgb(24,24,24)"/><rect x="112" y="505" width="1" height="142" fill="rgb(17,17,17)"/><rect x="168" y="505" width="1" height="142" fill="rgb(17,17,17)"/><rect x="224" y="505" width="1" height="142" fill="rgb(17,17,17)"/><rect x="279" y="505" width="1" height="142" fill="rgb(17,17,17)"/><rect x="335" y="505" width="1" height="142" fill="rgb(17,17,17)"/><rect x="391" y="505" width="1" height="142" fill="rgb(17,17,17)"/><rect x="447" y="505" width="1" height="142" fill="rgb(17,17,17)"/><rect x="502" y="505" width="1" height="142" fill="rgb(17,17,17)"/><rect x="558" y="505" width="1" height="142" fill="rgb(17,17,17)"/><rect x="614" y="505" width="1" height="142" fill="rgb(17,17,17)"/><rect x="670" y="505" width="1" height="142" fill="rgb(17,17,17)"/><rect x="725" y="505" width="1" height="142" fill="rgb(17,17,17)"/><rect x="781" y="505" width="1" height="142" fill="rgb(17,17,17)"/><rect x="837" y="505" width="1" height="142" fill="rgb(17,17,17)"/><rect x="893" y="505" width="1" height="142" fill="rgb(17,17,17)"/><rect x="948" y="505" width="1" height="142" fill="rgb(17,17,17)"/><rect x="1004" y="505" width="1" height="142" fill="rgb(17,17,17)"/></g>
<path d="M69.00,526.50 L72.00,526.50 L75.00,526.50 L78.00,526.50 L79.00,527.50 L80.00,526.50 L81.00,526.50 L84.00,526.50 L87.00,526.50 L90.00,526.50 L93.00,526.50 L94.00,527.50 L95.00,526.50 L96.00,526.50 L99.00,526.50 L102.00,526.50 L105.00,526.50 L108.00,526.50 L111.00,526.50 L114.00,526.50 L117.00,526.50 L120.00,526.50 L123.00,526.50 L126.00,526.50 L127.00,527.50 L128.00,526.50 L129.00,526.50 L130.00,525.50 L131.00,526.50 L132.00,526.50 L135.00,526.50 L138.00,526.50 L141.00,526.50 L144.00,526.50 L145.00,525.50 L146.00,526.50 L147.00,526.50 L150.00,526.50 L151.00,525.50 L152.00,526.50 L153.00,526.50 L156.00,526.50 L159.00,526.50 L162.00,526.50 L165.00,526.50 L168.00,526.50 L171.00,526.50 L174.00,526.50 L177.00,526.50 L180.00,526.50 L183.00,526.50 L186.00,526.50 L189.00,526.50 L192.00,526.50 L193.00,525.50 L194.00,526.50 L195.00,526.50 L198.00,526.50 L201.00,526.50 L204.00,526.50 L207.00,526.50 L210.00,526.50 L213.00,526.50 L216.00,526.50 L219.00,526.50 L222.00,526.50 L225.00,526.50 L228.00,526.50 L229.00,525.50 L230.00,526.50 L231.00,526.50 L232.00,525.50 L233.00,526.50 L234.00,526.50 L237.00,526.50 L240.00,526.50 L243.00,526.50 L246.00,526.50 L249.00,526.50 L252.00,526.50 L255.00,526.50 L258.00,526.50 L261.00,526.50 L264.00,526.50 L267.00,526.50 L270.00,526.50 L273.00,526.50 L276.00,526.50 L279.00,526.50 L282.00,526.50 L285.00,526.50 L288.00,526.50 L291.00,526.50 L294.00,526.50 L295.00,527.50 L296.00,526.50 L297.00,526.50 L300.00,526.50 L303.00,526.50 L306.00,526.50 L309.00,526.50 L312.00,526.50 L315.00,526.50 L318.00,526.50 L321.00,526.50 L324.00,526.50 L327.00,526.50 L330.00,526.50 L333.00,526.50 L336.00,526.50 L337.00,527.50 L338.00,526.50 L339.00,526.50 L342.00,526.50 L345.00,526.50 L348.00,526.50 L351.00,526.50 L354.00,526.50 L357.00,526.50 L360.00,526.50 L363.00,526.50 L366.00,526.50 L369.00,526.50 L372.00,526.50 L375.00,526.50 L378.00,526.50 L381.00,526.50 L384.00,526.50 L387.00,526.50 L388.00,527.50 L389.00,526.50 L390.00,526.50 L393.00,526.50 L396.00,526.50 L399.00,526.50 L400.00,525.50 L401.00,526.50 L402.00,526.50 L405.00,526.50 L408.00,526.50 L411.00,526.50 L414.00,526.50 L417.00,526.50 L420.00,526.50 L423.00,526.50 L426.00,526.50 L427.00,527.50 L428.00,526.50 L429.00,526.50 L432.00,526.50 L433.00,527.50 L434.00,526.50 L435.00,526.50 L438.00,526.50 L439.00,527.50 L440.00,526.50 L441.00,526.50 L444.00,526.50 L447.00,526.50 L450.00,526.50 L453.00,526.50 L456.00,526.50 L457.00,527.50 L458.00,526.50 L459.00,526.50 L462.00,526.50 L463.00,525.50 L464.00,526.50 L465.00,526.50 L468.00,526.50 L469.00,525.50 L470.00,526.50 L471.00,526.50 L474.00,526.50 L477.00,526.50 L480.00,526.50 L481.00,527.50 L482.00,526.50 L483.00,526.50 L484.00,525.50 L485.00,526.50 L486.00,526.50 L489.00,526.50 L492.00,526.50 L493.00,527.50 L494.00,526.50 L495.00,526.50 L498.00,526.50 L499.00,525.50 L500.00,526.50 L501.00,526.50 L504.00,526.50 L505.00,527.50 L506.00,526.50 L507.00,526.50 L510.00,526.50 L513.00,526.50 L516.00,526.50 L519.00,526.50 L522.00,526.50 L523.00,525.50 L524.00,526.50 L525.00,526.50 L528.00,526.50 L529.00,525.50 L530.00,526.50 L531.00,526.50 L534.00,526.50 L537.00,526.50 L538.00,525.50 L539.00,526.50 L540.00,526.50 L541.00,527.50 L542.00,526.50 L543.00,526.50 L546.00,526.50 L549.00,526.50 L552.00,526.50 L553.00,525.50 L554.00,526.50 L555.00,526.50 L558.00,526.50 L561.00,526.50 L562.00,525.50 L563.00,526.50 L564.00,526.50 L567.00,526.50 L568.00,527.50 L569.00,526.50 L570.00,526.50 L573.00,526.50 L576.00,526.50 L579.00,526.50 L580.00,525.50 L581.00,526.50 L582.00,526.50 L585.00,526.50 L588.70,557.50 L589.00,557.50 L592.00,557.50 L593.00,558.50 L594.00,557.50 L595.00,557.50 L598.00,557.50 L601.00,557.50 L604.00,557.50 L607.00,557.50 L610.00,557.50 L611.00,556.50 L612.00,557.50 L613.00,557.50 L616.00,557.50 L619.00,557.50 L622.00,557.50 L625.00,557.50 L628.00,557.50 L631.00,557.50 L634.00,557.50 L637.00,557.50 L640.00,557.50 L643.00,557.50 L646.00,557.50 L649.00,557.50 L652.00,557.50 L655.00,557.50 L658.00,557.50 L661.00,557.50 L664.00,557.50 L665.00,558.50 L666.00,557.50 L667.00,557.50 L670.00,557.50 L671.00,558.50 L672.00,557.50 L673.00,557.50 L676.00,557.50 L679.00,557.50 L682.00,557.50 L685.00,557.50 L688.00,557.50 L691.00,557.50 L694.00,557.50 L697.00,557.50 L700.00,557.50 L703.00,557.50 L706.00,557.50 L709.00,557.50 L712.00,557.50 L715.00,557.50 L718.00,557.50 L719.00,556.50 L720.00,557.50 L721.00,557.50 L724.00,557.50 L725.00,556.50 L726.00,557.50 L727.00,557.50 L730.00,557.50 L733.00,557.50 L734.00,558.50 L735.00,557.50 L736.00,557.50 L739.00,557.50 L742.00,557.50 L745.00,557.50 L748.00,557.50 L749.00,558.50 L750.00,557.50 L751.00,557.50 L754.00,557.50 L757.00,557.50 L758.00,558.50 L759.00,557.50 L760.00,557.50 L763.00,557.50 L766.00,557.50 L769.00,557.50 L770.00,558.50 L771.00,557.50 L772.00,557.50 L775.00,557.50 L778.00,557.50 L781.00,557.50 L784.00,557.50 L787.00,557.50 L790.00,557.50 L791.00,556.50 L792.00,557.50 L793.00,557.50 L796.00,557.50 L797.00,558.50 L798.00,557.50 L799.00,557.50 L802.00,557.50 L805.00,557.50 L806.00,556.50 L807.00,557.50 L808.00,557.50 L811.00,557.50 L814.00,557.50 L815.00,556.50 L816.00,557.50 L817.00,557.50 L820.00,557.50 L823.00,557.50 L824.00,556.50 L825.00,557.50 L826.00,557.50 L827.00,558.50 L828.00,557.50 L829.00,557.50 L832.00,557.50 L835.00,557.50 L836.00,558.50 L837.00,557.50 L838.00,557.50 L839.00,558.50 L840.00,557.50 L841.00,557.50 L842.00,558.50 L843.00,557.50 L844.00,557.50 L847.00,557.50 L850.00,557.50 L853.00,557.50 L856.00,557.50 L859.00,557.50 L862.00,557.50 L863.00,558.50 L864.00,557.50 L865.00,557.50 L866.00,558.50 L867.00,557.50 L868.00,557.50 L871.00,557.50 L874.00,557.50 L877.00,557.50 L880.00,557.50 L883.00,557.50 L886.00,557.50 L889.00,557.50 L892.00,557.50 L895.00,557.50 L898.00,557.50 L899.00,556.50 L900.00,557.50 L901.00,557.50 L904.00,557.50 L907.00,557.50 L908.00,556.50 L909.00,557.50 L910.00,557.50 L913.00,557.50 L916.00,557.50 L919.00,557.50 L922.00,557.50 L923.00,552.50 L923.00,552.50 L924.00,551.50 L925.00,552.50 L926.00,552.50 L929.00,552.50 L932.00,552.50 L935.00,552.50 L938.00,552.50 L941.00,552.50 L944.00,552.50 L947.00,552.50 L950.00,552.50 L953.00,552.50 L956.00,552.50 L959.00,552.50 L960.00,553.50 L961.00,552.50 L962.00,552.50 L965.00,552.50 L968.00,552.50 L971.00,552.50 L974.00,552.50 L977.00,552.50 L980.00,552.50 L981.00,553.50 L982.00,552.50 L983.00,552.50 L984.00,553.50 L985.00,552.50 L984.00,552.50 L984.50,557.00 L986.00,552.50 L986.00,552.50 L989.00,552.50 L990.00,553.50 L991.00,552.50 L992.00,552.50 L995.00,552.50 L998.00,552.50 L1001.00,552.50 L1004.00,552.50 L1007.00,552.50 L1010.00,552.50 L1013.00,552.50 L1016.00,552.50 L1019.00,552.50 L1022.00,552.50 L1025.00,552.50 L1028.00,552.50 L1031.00,552.50" fill="none" stroke="#28608f" stroke-width="1" stroke-dasharray="4 2" shape-rendering="crispEdges"/>
<path d="M69.00,617.50 L72.00,617.50 L73.00,616.50 L74.00,617.50 L75.00,617.50 L78.00,617.50 L79.00,618.50 L80.00,617.50 L81.00,617.50 L82.00,616.50 L83.00,617.50 L84.00,617.50 L87.00,617.50 L90.00,617.50 L93.00,617.50 L96.00,617.50 L97.00,618.50 L98.00,617.50 L99.00,617.50 L102.00,617.50 L103.00,618.50 L104.00,617.50 L105.00,617.50 L106.00,618.50 L107.00,617.50 L108.00,617.50 L111.00,617.50 L114.00,617.50 L117.00,617.50 L120.00,617.50 L123.00,617.50 L126.00,617.50 L129.00,617.50 L132.00,617.50 L135.00,617.50 L136.00,616.50 L137.00,617.50 L138.00,617.50 L141.00,617.50 L144.00,617.50 L147.00,617.50 L150.00,617.50 L151.00,616.50 L152.00,617.50 L153.00,617.50 L156.00,617.50 L159.00,617.50 L162.00,617.50 L165.00,617.50 L166.00,618.50 L167.00,617.50 L168.00,617.50 L169.00,618.50 L170.00,617.50 L171.00,617.50 L172.00,616.50 L173.00,617.50 L174.00,617.50 L177.00,617.50 L180.00,617.50 L181.00,618.50 L182.00,617.50 L183.00,617.50 L186.00,617.50 L187.00,618.50 L188.00,617.50 L189.00,617.50 L192.00,617.50 L195.00,617.50 L198.00,617.50 L201.00,617.50 L202.00,618.50 L203.00,617.50 L204.00,617.50 L207.00,617.50 L210.00,617.50 L211.00,618.50 L212.00,617.50 L213.00,617.50 L216.00,617.50 L219.00,617.50 L220.00,618.50 L221.00,617.50 L222.00,617.50 L225.00,617.50 L228.00,617.50 L231.00,617.50 L234.00,617.50 L237.00,617.50 L238.00,618.50 L239.00,617.50 L240.00,617.50 L243.00,617.50 L246.00,617.50 L249.00,617.50 L252.00,617.50 L255.00,617.50 L256.00,616.50 L257.00,617.50 L258.00,617.50 L259.00,618.50 L260.00,617.50 L261.00,617.50 L264.00,617.50 L267.00,617.50 L268.00,616.50 L269.00,617.50 L270.00,617.50 L271.00,618.50 L272.00,617.50 L273.00,617.50 L276.00,617.50 L279.00,617.50 L280.00,618.50 L281.00,617.50 L282.00,617.50 L285.00,617.50 L288.00,617.50 L291.00,617.50 L294.00,617.50 L297.00,617.50 L300.00,617.50 L301.00,618.50 L302.00,617.50 L303.00,617.50 L306.00,617.50 L309.00,617.50 L312.00,617.50 L315.00,617.50 L316.00,618.50 L317.00,617.50 L318.00,617.50 L321.00,617.50 L324.00,617.50 L325.00,616.50 L326.00,617.50 L327.00,617.50 L328.00,618.50 L329.00,617.50 L330.00,617.50 L333.00,617.50 L336.00,617.50 L339.00,617.50 L342.00,617.50 L345.00,617.50 L346.00,618.50 L347.00,617.50 L348.00,617.50 L349.00,618.50 L350.00,617.50 L351.00,617.50 L352.00,616.50 L353.00,617.50 L354.00,617.50 L357.00,617.50 L360.00,617.50 L363.00,617.50 L366.00,617.50 L369.00,617.50 L372.00,617.50 L375.00,617.50 L378.00,617.50 L379.00,618.50 L380.00,617.50 L381.00,617.50 L382.00,618.50 L383.00,617.50 L384.00,617.50 L387.00,617.50 L390.00,617.50 L393.00,617.50 L396.00,617.50 L399.00,617.50 L402.00,617.50 L405.00,617.50 L406.00,618.50 L407.00,617.50 L408.00,617.50 L411.00,617.50 L414.00,617.50 L417.00,617.50 L418.00,618.50 L419.00,617.50 L420.00,617.50 L423.00,617.50 L426.00,617.50 L429.00,617.50 L432.00,617.50 L435.00,617.50 L438.00,617.50 L441.00,617.50 L444.00,617.50 L447.00,617.50 L448.00,616.50 L449.00,617.50 L450.00,617.50 L453.00,617.50 L456.00,617.50 L459.00,617.50 L460.00,618.50 L461.00,617.50 L462.00,617.50 L465.00,617.50 L468.00,617.50 L471.00,617.50 L474.00,617.50 L477.00,617.50 L480.00,617.50 L483.00,617.50 L486.00,617.50 L487.00,616.50 L488.00,617.50 L489.00,617.50 L492.00,617.50 L495.00,617.50 L498.00,617.50 L499.00,618.50 L500.00,617.50 L501.00,617.50 L504.00,617.50 L507.00,617.50 L510.00,617.50 L513.00,617.50 L516.00,617.50 L519.00,617.50 L522.00,617.50 L525.00,617.50 L528.00,617.50 L531.00,617.50 L534.00,617.50 L535.00,616.50 L536.00,617.50 L537.00,617.50 L540.00,617.50 L543.00,617.50 L546.00,617.50 L549.00,617.50 L552.00,617.50 L555.00,617.50 L558.00,617.50 L559.00,618.50 L560.00,617.50 L561.00,617.50 L564.00,617.50 L565.00,616.50 L566.00,617.50 L567.00,617.50 L570.00,617.50 L571.00,616.50 L572.00,617.50 L573.00,617.50 L574.00,616.50 L575.00,617.50 L576.00,617.50 L579.00,617.50 L580.00,616.50 L581.00,617.50 L582.00,617.50 L585.00,617.50 L585.50,617.50 L589.00,601.50 L589.00,601.50 L592.00,601.50 L595.00,601.50 L598.00,601.50 L601.00,601.50 L604.00,601.50 L605.00,602.50 L606.00,601.50 L607.00,601.50 L610.00,601.50 L613.00,601.50 L614.00,602.50 L615.00,601.50 L616.00,601.50 L617.00,602.50 L618.00,601.50 L619.00,601.50 L622.00,601.50 L625.00,601.50 L628.00,601.50 L631.00,601.50 L634.00,601.50 L637.00,601.50 L640.00,601.50 L643.00,601.50 L646.00,601.50 L647.00,600.50 L648.00,601.50 L649.00,601.50 L652.00,601.50 L653.00,602.50 L654.00,601.50 L655.00,601.50 L656.00,602.50 L657.00,601.50 L658.00,601.50 L659.00,600.50 L660.00,601.50 L661.00,601.50 L664.00,601.50 L665.00,602.50 L666.00,601.50 L667.00,601.50 L668.00,602.50 L669.00,601.50 L670.00,601.50 L673.00,601.50 L676.00,601.50 L679.00,601.50 L682.00,601.50 L685.00,601.50 L688.00,601.50 L691.00,601.50 L694.00,601.50 L697.00,601.50 L698.00,600.50 L699.00,601.50 L700.00,601.50 L703.00,601.50 L706.00,601.50 L707.00,600.50 L708.00,601.50 L709.00,601.50 L710.00,602.50 L711.00,601.50 L712.00,601.50 L715.00,601.50 L718.00,601.50 L721.00,601.50 L724.00,601.50 L727.00,601.50 L730.00,601.50 L733.00,601.50 L736.00,601.50 L739.00,601.50 L742.00,601.50 L743.00,600.50 L744.00,601.50 L745.00,601.50 L746.00,602.50 L747.00,601.50 L748.00,601.50 L751.00,601.50 L754.00,601.50 L757.00,601.50 L760.00,601.50 L763.00,601.50 L766.00,601.50 L769.00,601.50 L772.00,601.50 L775.00,601.50 L778.00,601.50 L781.00,601.50 L784.00,601.50 L787.00,601.50 L788.00,602.50 L789.00,601.50 L790.00,601.50 L793.00,601.50 L796.00,601.50 L799.00,601.50 L802.00,601.50 L805.00,601.50 L808.00,601.50 L811.00,601.50 L812.00,600.50 L813.00,601.50 L814.00,601.50 L817.00,601.50 L820.00,601.50 L823.00,601.50 L826.00,601.50 L829.00,601.50 L832.00,601.50 L835.00,601.50 L838.00,601.50 L841.00,601.50 L844.00,601.50 L847.00,601.50 L850.00,601.50 L853.00,601.50 L856.00,601.50 L859.00,601.50 L862.00,601.50 L865.00,601.50 L868.00,601.50 L869.00,602.50 L870.00,601.50 L871.00,601.50 L874.00,601.50 L877.00,601.50 L880.00,601.50 L883.00,601.50 L886.00,601.50 L889.00,601.50 L892.00,601.50 L893.00,600.50 L894.00,601.50 L895.00,601.50 L896.00,602.50 L897.00,601.50 L898.00,601.50 L901.00,601.50 L904.00,601.50 L907.00,601.50 L910.00,601.50 L913.00,601.50 L914.00,602.50 L915.00,601.50 L916.00,601.50 L919.00,601.50 L922.00,601.50 L923.00,607.50 L923.00,607.50 L926.00,607.50 L929.00,607.50 L930.00,606.50 L931.00,607.50 L932.00,607.50 L935.00,607.50 L936.00,606.50 L937.00,607.50 L938.00,607.50 L941.00,607.50 L944.00,607.50 L947.00,607.50 L950.00,607.50 L953.00,607.50 L956.00,607.50 L959.00,607.50 L962.00,607.50 L965.00,607.50 L966.00,608.50 L967.00,607.50 L968.00,607.50 L971.00,607.50 L974.00,607.50 L977.00,607.50 L980.00,607.50 L981.00,606.50 L982.00,607.50 L983.00,607.50 L984.00,607.50 L984.50,602.00 L986.00,607.50 L986.00,607.50 L987.00,608.50 L988.00,607.50 L989.00,607.50 L992.00,607.50 L995.00,607.50 L996.00,606.50 L997.00,607.50 L998.00,607.50 L1001.00,607.50 L1004.00,607.50 L1005.00,608.50 L1006.00,607.50 L1007.00,607.50 L1010.00,607.50 L1011.00,608.50 L1012.00,607.50 L1013.00,607.50 L1016.00,607.50 L1019.00,607.50 L1022.00,607.50 L1025.00,607.50 L1026.00,608.50 L1027.00,607.50 L1028.00,607.50 L1031.00,607.50" fill="none" stroke="#28608f" stroke-width="1" stroke-dasharray="4 2" shape-rendering="crispEdges"/>
<rect x="69" y="579" width="962" height="1" fill="#3c82ba"/>
<rect x="68" y="505" width="1" height="143" fill="#a0a0a0"/>
<rect x="68" y="647" width="963" height="1" fill="#a0a0a0"/>
<g><text x="63" y="535.1" text-anchor="end" font-size="13" fill="#e0e0e0">20</text><text x="63" y="584.1" text-anchor="end" font-size="13" fill="#e0e0e0">0</text><text x="63" y="633.1" text-anchor="end" font-size="13" fill="#e0e0e0">-20</text><text x="112.5" y="662.6" text-anchor="middle" font-size="13" letter-spacing="0.35" fill="#e0e0e0">-14m</text><text x="168.25" y="662.6" text-anchor="middle" font-size="13" letter-spacing="0.35" fill="#e0e0e0">-13m</text><text x="224.0" y="662.6" text-anchor="middle" font-size="13" letter-spacing="0.35" fill="#e0e0e0">-12m</text><text x="279.75" y="662.6" text-anchor="middle" font-size="13" letter-spacing="0.35" fill="#e0e0e0">-11m</text><text x="335.5" y="662.6" text-anchor="middle" font-size="13" letter-spacing="0.35" fill="#e0e0e0">-10m</text><text x="391.25" y="662.6" text-anchor="middle" font-size="13" letter-spacing="0.35" fill="#e0e0e0">-9m</text><text x="447.0" y="662.6" text-anchor="middle" font-size="13" letter-spacing="0.35" fill="#e0e0e0">-8m</text><text x="502.75" y="662.6" text-anchor="middle" font-size="13" letter-spacing="0.35" fill="#e0e0e0">-7m</text><text x="558.5" y="662.6" text-anchor="middle" font-size="13" letter-spacing="0.35" fill="#e0e0e0">-6m</text><text x="614.25" y="662.6" text-anchor="middle" font-size="13" letter-spacing="0.35" fill="#e0e0e0">-5m</text><text x="670.0" y="662.6" text-anchor="middle" font-size="13" letter-spacing="0.35" fill="#e0e0e0">-4m</text><text x="725.75" y="662.6" text-anchor="middle" font-size="13" letter-spacing="0.35" fill="#e0e0e0">-3m</text><text x="781.5" y="662.6" text-anchor="middle" font-size="13" letter-spacing="0.35" fill="#e0e0e0">-2m</text><text x="837.25" y="662.6" text-anchor="middle" font-size="13" letter-spacing="0.35" fill="#e0e0e0">-1m</text><text x="893.0" y="662.6" text-anchor="middle" font-size="13" letter-spacing="0.35" fill="#e0e0e0">0</text><text x="948.75" y="662.6" text-anchor="middle" font-size="13" letter-spacing="0.35" fill="#e0e0e0">1m</text><text x="1004.5" y="662.6" text-anchor="middle" font-size="13" letter-spacing="0.35" fill="#e0e0e0">2m</text><text transform="translate(37.2,576.5) rotate(-90)" x="0" y="0" text-anchor="middle" font-size="13" fill="#e0e0e0" textLength="91" lengthAdjust="spacingAndGlyphs">counts (x1e-09)</text><text x="549.75" y="495.3" text-anchor="middle" font-size="12.7" fill="#e0e0e0" textLength="191.2" lengthAdjust="spacingAndGlyphs">H1:LSC-DARM_IN1_DQ [s-trend]</text></g>
<g><rect x="95" y="839" width="936" height="1" fill="rgb(8,8,8)"/><rect x="95" y="828" width="936" height="1" fill="rgb(8,8,8)"/><rect x="95" y="807" width="936" height="1" fill="rgb(8,8,8)"/><rect x="95" y="797" width="936" height="1" fill="rgb(8,8,8)"/><rect x="95" y="786" width="936" height="1" fill="rgb(8,8,8)"/><rect x="95" y="776" width="936" height="1" fill="rgb(8,8,8)"/><rect x="95" y="755" width="936" height="1" fill="rgb(8,8,8)"/><rect x="95" y="744" width="936" height="1" fill="rgb(8,8,8)"/><rect x="95" y="734" width="936" height="1" fill="rgb(8,8,8)"/><rect x="95" y="723" width="936" height="1" fill="rgb(8,8,8)"/><rect x="95" y="713" width="936" height="1" fill="rgb(21,21,21)"/><rect x="95" y="765" width="936" height="1" fill="rgb(21,21,21)"/><rect x="95" y="818" width="936" height="1" fill="rgb(21,21,21)"/><rect x="112" y="705" width="1" height="142" fill="rgb(19,19,19)"/><rect x="168" y="705" width="1" height="142" fill="rgb(19,19,19)"/><rect x="224" y="705" width="1" height="142" fill="rgb(19,19,19)"/><rect x="279" y="705" width="1" height="142" fill="rgb(19,19,19)"/><rect x="335" y="705" width="1" height="142" fill="rgb(19,19,19)"/><rect x="391" y="705" width="1" height="142" fill="rgb(19,19,19)"/><rect x="447" y="705" width="1" height="142" fill="rgb(19,19,19)"/><rect x="502" y="705" width="1" height="142" fill="rgb(19,19,19)"/><rect x="558" y="705" width="1" height="142" fill="rgb(19,19,19)"/><rect x="614" y="705" width="1" height="142" fill="rgb(19,19,19)"/><rect x="670" y="705" width="1" height="142" fill="rgb(19,19,19)"/><rect x="725" y="705" width="1" height="142" fill="rgb(19,19,19)"/><rect x="781" y="705" width="1" height="142" fill="rgb(19,19,19)"/><rect x="837" y="705" width="1" height="142" fill="rgb(19,19,19)"/><rect x="893" y="705" width="1" height="142" fill="rgb(19,19,19)"/><rect x="948" y="705" width="1" height="142" fill="rgb(19,19,19)"/><rect x="1004" y="705" width="1" height="142" fill="rgb(19,19,19)"/></g>
<path d="M95,766.5 h2 M103,766.5 h4 M110,766.5 h3 M118,766.5 h2 M123,766.5 h4 M130,766.5 h2 M135,766.5 h3 M144,766.5 h2 M152,766.5 h3 M161,766.5 h2 M166,766.5 h3 M172,766.5 h3 M180,766.5 h2 M188,766.5 h2 M195,766.5 h2 M200,766.5 h2 M206,766.5 h2 M212,766.5 h2 M217,766.5 h3 M225,766.5 h4 M234,766.5 h2 M239,766.5 h2 M245,766.5 h3 M251,766.5 h2 M258,766.5 h2 M263,766.5 h3 M272,766.5 h2 M279,766.5 h3 M285,766.5 h3 M294,766.5 h2 M301,766.5 h3 M307,766.5 h2 M314,766.5 h2 M321,766.5 h2 M326,766.5 h4 M333,766.5 h3 M341,766.5 h2 M347,766.5 h4 M354,766.5 h2 M359,766.5 h2 M364,766.5 h2 M369,766.5 h2 M375,766.5 h2 M381,766.5 h3 M387,766.5 h3 M394,766.5 h2 M400,766.5 h2 M405,766.5 h3 M412,766.5 h4 M422,766.5 h2 M429,766.5 h4 M439,766.5 h2 M446,766.5 h2 M451,766.5 h3 M457,766.5 h2 M465,766.5 h3 M473,766.5 h2 M479,766.5 h2 M487,766.5 h4 M497,766.5 h3 M504,766.5 h2 M511,766.5 h2 M518,766.5 h3 M527,766.5 h2 M533,766.5 h3 M540,766.5 h3 M549,766.5 h3 M557,766.5 h3 M566,766.5 h2 M571,766.5 h2 M579,766.5 h3 M586,766.5 h3 M594,766.5 h2 M601,766.5 h2 M609,766.5 h2 M615,766.5 h3 M621,766.5 h2 M629,766.5 h2 M634,766.5 h2 M640,766.5 h3 M648,766.5 h2 M656,766.5 h2 M664,766.5 h2 M671,766.5 h3 M677,766.5 h2 M683,766.5 h2 M689,766.5 h3 M696,766.5 h2 M703,766.5 h2 M709,766.5 h4 M719,766.5 h2 M727,766.5 h3 M736,766.5 h3 M742,766.5 h2 M748,766.5 h2 M753,766.5 h2 M759,766.5 h2 M764,766.5 h2 M769,766.5 h4 M776,766.5 h3 M782,766.5 h2 M789,766.5 h2 M794,766.5 h2 M802,766.5 h2 M807,766.5 h4 M814,766.5 h2 M820,766.5 h3 M826,766.5 h2 M831,766.5 h2 M836,766.5 h2 M843,766.5 h4 M850,766.5 h3 M857,766.5 h2 M862,766.5 h3 M869,766.5 h2 M876,766.5 h3 M882,766.5 h2 M888,766.5 h2 M893,766.5 h4 M900,766.5 h3 M908,766.5 h2 M915,766.5 h3 M921,766.5 h3 M930,766.5 h2 M937,766.5 h2 M944,766.5 h3 M953,766.5 h3 M961,766.5 h4 M971,766.5 h3 M977,766.5 h4 M987,766.5 h2 M995,766.5 h4 M1005,766.5 h2 M1010,766.5 h2 M1015,766.5 h2 M1022,766.5 h3 M1028,766.5 h3" stroke="#a8621f" stroke-width="1" fill="none"/>
<rect x="95" y="765" width="936" height="1" fill="#e98a2e"/>
<rect x="94" y="705" width="1" height="143" fill="#a0a0a0"/>
<rect x="94" y="847" width="937" height="1" fill="#a0a0a0"/>
<g><text x="89" y="718.0" text-anchor="end" font-size="13" fill="#e0e0e0">10000</text><text x="89" y="770.5" text-anchor="end" font-size="13" fill="#e0e0e0">0</text><text x="89" y="823.0" text-anchor="end" font-size="13" fill="#e0e0e0">-10000</text><text x="112.5" y="862.6" text-anchor="middle" font-size="13" letter-spacing="0.35" fill="#e0e0e0">-14m</text><text x="168.25" y="862.6" text-anchor="middle" font-size="13" letter-spacing="0.35" fill="#e0e0e0">-13m</text><text x="224.0" y="862.6" text-anchor="middle" font-size="13" letter-spacing="0.35" fill="#e0e0e0">-12m</text><text x="279.75" y="862.6" text-anchor="middle" font-size="13" letter-spacing="0.35" fill="#e0e0e0">-11m</text><text x="335.5" y="862.6" text-anchor="middle" font-size="13" letter-spacing="0.35" fill="#e0e0e0">-10m</text><text x="391.25" y="862.6" text-anchor="middle" font-size="13" letter-spacing="0.35" fill="#e0e0e0">-9m</text><text x="447.0" y="862.6" text-anchor="middle" font-size="13" letter-spacing="0.35" fill="#e0e0e0">-8m</text><text x="502.75" y="862.6" text-anchor="middle" font-size="13" letter-spacing="0.35" fill="#e0e0e0">-7m</text><text x="558.5" y="862.6" text-anchor="middle" font-size="13" letter-spacing="0.35" fill="#e0e0e0">-6m</text><text x="614.25" y="862.6" text-anchor="middle" font-size="13" letter-spacing="0.35" fill="#e0e0e0">-5m</text><text x="670.0" y="862.6" text-anchor="middle" font-size="13" letter-spacing="0.35" fill="#e0e0e0">-4m</text><text x="725.75" y="862.6" text-anchor="middle" font-size="13" letter-spacing="0.35" fill="#e0e0e0">-3m</text><text x="781.5" y="862.6" text-anchor="middle" font-size="13" letter-spacing="0.35" fill="#e0e0e0">-2m</text><text x="837.25" y="862.6" text-anchor="middle" font-size="13" letter-spacing="0.35" fill="#e0e0e0">-1m</text><text x="893.0" y="862.6" text-anchor="middle" font-size="13" letter-spacing="0.35" fill="#e0e0e0">0</text><text x="948.75" y="862.6" text-anchor="middle" font-size="13" letter-spacing="0.35" fill="#e0e0e0">1m</text><text x="1004.5" y="862.6" text-anchor="middle" font-size="13" letter-spacing="0.35" fill="#e0e0e0">2m</text><text transform="translate(37.2,776.5) rotate(-90)" x="0" y="0" text-anchor="middle" font-size="13" fill="#e0e0e0" textLength="40" lengthAdjust="spacingAndGlyphs">counts</text><text x="562.75" y="695.3" text-anchor="middle" font-size="12.7" fill="#e0e0e0" textLength="193.4" lengthAdjust="spacingAndGlyphs">H1:LSC-DARM2_OUT16 [s-trend]</text></g>
<text x="527.5" y="904.5" text-anchor="middle" font-size="16" fill="#e0e0e0" textLength="404.6" lengthAdjust="spacingAndGlyphs">t0 = Tue Nov 04 2025 15:45:04 UTC [1446306322.0000]</text>
</svg></body></html>
